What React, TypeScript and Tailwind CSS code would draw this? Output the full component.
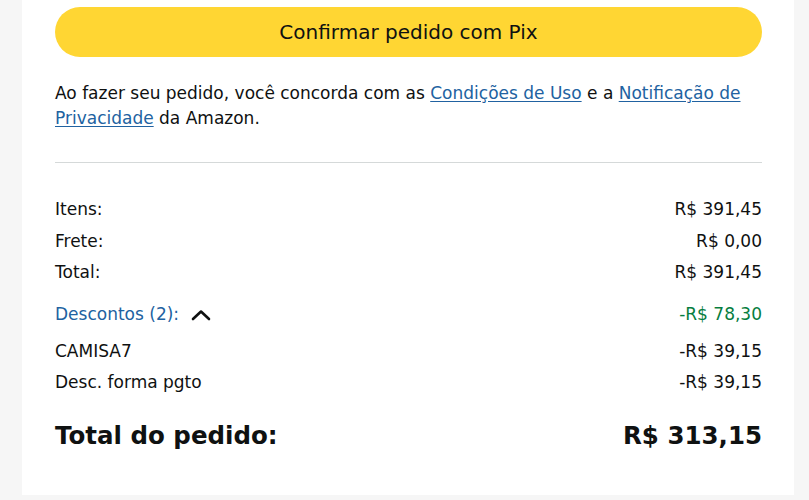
import React from "react"

const font = { fontFamily: '"DejaVu Sans", "Noto Sans", Arial, sans-serif' }

const Row = ({ label, value, className = "" }: { label: string; value: string; className?: string }) => (
  <div className={`flex justify-between items-center h-[31.5px] ${className}`}>
    <span>{label}</span>
    <span>{value}</span>
  </div>
)

const linkCls = "text-[#2162a1] underline underline-offset-2"

export default function App() {
  return (
    <div className="min-h-[500px] bg-[#f6f6f6] text-[#0f1111]" style={font}>
      <div className="ml-[22px] w-[772px] bg-white pl-[33px] pr-[32px] pt-[7px] pb-[41px]">
        <button className="w-full h-[50px] rounded-full bg-[#ffd633] text-[20px] text-[#0f1111]">
          Confirmar pedido com Pix
        </button>

        {/* legal notice, link broken onto two lines */}
        <p className="mt-[24px] text-[17px] leading-[25px]">
          Ao fazer seu pedido, você concorda com as <a className={linkCls}>Condições de Uso</a> e a{" "}
          <a className={linkCls}>Notificação de</a>
          <br />
          <a className={linkCls}>Privacidade</a> da Amazon.
        </p>

        <div className="mt-[31px] h-px bg-[#d5d9d9]" />

        <div className="mt-[31px] text-[17px]">
          <Row label="Itens:" value="R$ 391,45" />
          <Row label="Frete:" value="R$ 0,00" />
          <Row label="Total:" value="R$ 391,45" />
          <div className="flex justify-between items-center h-[42px] mt-[5px]">
            <span className="flex items-center gap-[12px] text-[#2162a1]">
              Descontos (2):
              <svg width="20" height="12" viewBox="0 0 20 12" fill="none">
                <path d="M2 10 L10 2.5 L18 10" stroke="#0f1111" strokeWidth="2.6" strokeLinecap="round" strokeLinejoin="round" />
              </svg>
            </span>
            <span className="text-[#067d3e]">-R$ 78,30</span>
          </div>
          <Row label="CAMISA7" value="-R$ 39,15" />
          <Row label="Desc. forma pgto" value="-R$ 39,15" />
        </div>

        <div className="mt-[19px] flex justify-between items-center text-[24.5px] leading-[36px] font-bold">
          <span>Total do pedido:</span>
          <span>R$ 313,15</span>
        </div>
      </div>
    </div>
  )
}
